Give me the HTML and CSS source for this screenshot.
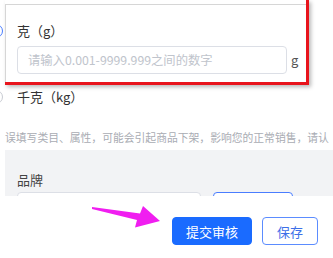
FILE: index.html
```html
<!DOCTYPE html>
<html lang="zh-CN">
<head>
<meta charset="utf-8">
<title>商品编辑</title>
<link rel="stylesheet" href="styles.css">
</head>
<body>
<div class="page">
  <div class="form">
    <div class="radio-row"><span class="radio checked"></span><span class="label">克（g）</span></div>
    <div class="input-row"></div>
    <div class="radio-row second"><span class="radio"></span><span class="label">千克（kg）</span></div>
    <p class="hint">误填写类目、属性，可能会引起商品下架，影响您的正常销售，请认</p>
  </div>
  <section class="brand">
    <div class="brand-label">品牌</div>
    <div class="brand-row"><div class="brand-input"></div><div class="brand-btn"></div></div>
  </section>
  <footer class="footer">
    <svg class="arrow" width="72" height="26" viewBox="0 0 72 26">
      <polygon points="2,3 50,9.5 53,2 70,17 45,23.5 47,16 2,5" fill="#f01ef0"/>
    </svg>
    <button class="btn primary">提交审核</button>
    <button class="btn plain">保存</button>
  </footer>
  <div class="highlight">
    <div class="panel">
      <div class="panel-label">克（g）</div>
      <div class="panel-input-row">
        <div class="input">请输入0.001-9999.999之间的数字</div>
        <span class="unit">g</span>
      </div>
    </div>
  </div>
</div>
</body>
</html>
```

FILE: styles.css
```css
* { box-sizing: border-box; }
html, body { margin: 0; padding: 0; background: #fff; }
body {
  width: 333px;
  height: 258px;
  overflow: hidden;
  font-family: "Noto Sans CJK SC", "Noto Sans", sans-serif;
  color: #333;
}
.page { position: relative; width: 333px; height: 258px; overflow: hidden; }

.form { padding: 21px 0 0 5px; }
.radio-row { display: flex; align-items: center; height: 20px; }
.radio {
  width: 14px; height: 14px; border-radius: 50%;
  border: 1px solid #c8cbd2;
  margin-left: -16px; margin-right: 14px;
  flex: none;
}
.radio.checked { border: 1.5px solid #4a7dff; }
.label { font-size: 13px; line-height: 20px; color: #333; }
.input-row { height: 28px; margin: 5px 0 0 12px; }
.radio-row.second { margin-top: 13px; }
.hint {
  margin: 23px 0 0 0;
  font-size: 10.8px; line-height: 14px;
  color: #a9acb3;
  white-space: nowrap;
}

.brand {
  margin: 6px 0 0 5px;
  height: 46px;
  overflow: hidden;
  background: #f2f3f5;
  padding: 20px 0 0 12px;
}
.brand-label { font-size: 13px; line-height: 20px; color: #444; }
.brand-row { display: flex; gap: 12px; margin-top: 2px; }
.brand-input { width: 184px; height: 32px; border: 1px solid #dcdfe6; border-radius: 4px; background: #fff; }
.brand-btn { width: 80px; height: 32px; border: 1px solid #4a7dff; border-radius: 4px; background: #fff; }

.footer {
  position: relative;
  height: 62px;
  display: flex;
  justify-content: flex-end;
  align-items: flex-start;
  gap: 10px;
  padding: 21px 15px 0 0;
  background: #fff;
}
.arrow { position: absolute; left: 90px; top: 8px; }
.btn {
  height: 28px;
  border-radius: 4px;
  font-family: "Noto Sans CJK SC", sans-serif;
  font-size: 13px;
  padding: 0;
  cursor: pointer;
}
.btn.primary { width: 80px; background: #1a6bff; border: 1px solid #1a6bff; color: #fff; }
.btn.plain { width: 56px; background: #fff; border: 1px solid #5b8cff; color: #3d6fe8; }

.highlight {
  position: absolute;
  left: 5px; top: 0;
  width: 304px; height: 85px;
  border-right: 3px solid #e8141c;
  border-bottom: 3px solid #e8141c;
  box-shadow: 2px 2px 4px rgba(0,0,0,0.28);
}
.panel {
  margin-top: 4px;
  height: 78px;
  background: #fff;
  border-top: 1px solid #d6d6d6;
  border-left: 1px solid #d6d6d6;
  padding: 16px 0 0 11px;
}
.panel-label { font-size: 13px; line-height: 20px; color: #333; }
.panel-input-row { display: flex; align-items: center; margin-top: 5px; }
.input {
  width: 270px; height: 28px;
  border: 1px solid #dcdfe6; border-radius: 4px;
  padding-left: 10px;
  font-size: 12.3px; line-height: 26px;
  color: #c0c4cc;
  white-space: nowrap;
}
.unit { margin-left: 4px; font-size: 13px; color: #555; line-height: 20px; }
```
